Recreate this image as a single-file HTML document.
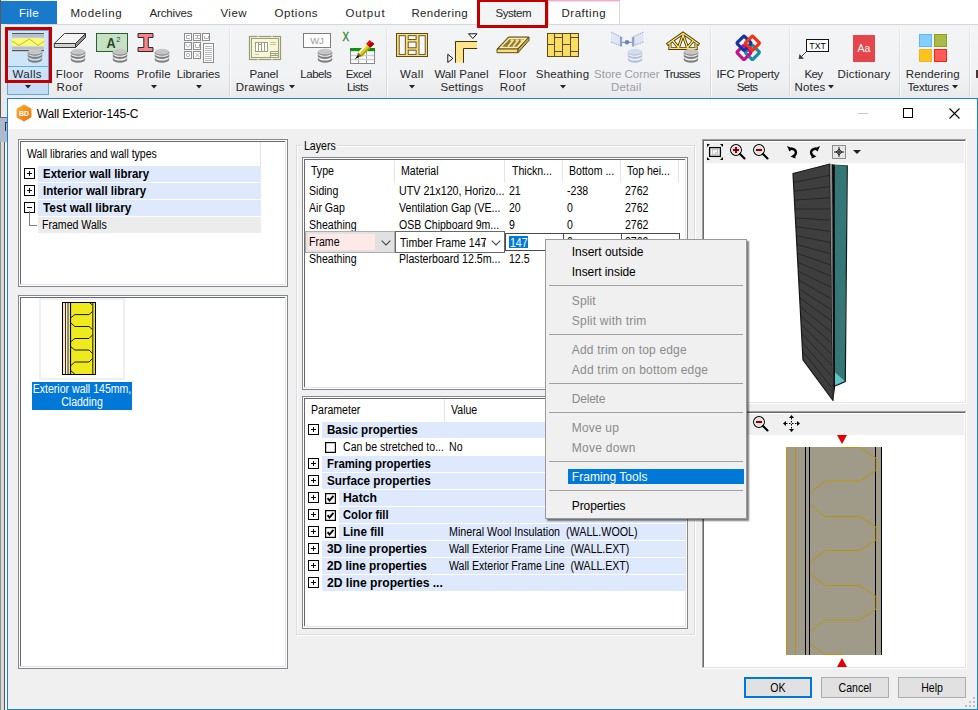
<!DOCTYPE html>
<html><head><meta charset="utf-8"><title>Wall Exterior-145-C</title>
<style>
html,body{margin:0;padding:0;}
body{width:978px;height:710px;overflow:hidden;background:#f0f0f0;position:relative;}
#root{position:absolute;left:0;top:0;width:978px;height:710px;overflow:hidden;}
#root div,#root span.t,#root svg{position:absolute;}
.t{white-space:pre;line-height:14px;}
.sg{font-family:"Liberation Sans",sans-serif;font-size:11.5px;letter-spacing:.35px;}
.ms{font-family:"Liberation Sans",sans-serif;font-size:12px;transform-origin:0 0;}
</style></head><body><div id="root">
<div style="left:0px;top:0px;width:978px;height:24px;background:#fff;"></div>
<div style="left:0px;top:24px;width:978px;height:74px;background:linear-gradient(#f3f4f6,#f1f2f4 70%,#e9eaec);"></div>
<div style="left:0px;top:24px;width:978px;height:1px;background:#d4d6d9;"></div>
<div style="left:0px;top:0px;width:1px;height:117px;background:#5a5a5a;"></div>
<div style="left:0px;top:117px;width:7px;height:25px;background:#adb9cd;"></div>
<div style="left:0px;top:117px;width:7px;height:1px;background:#6b6b6b;"></div>
<div style="left:0px;top:142px;width:7px;height:568px;background:#d9d9d9;"></div>
<div style="left:0px;top:142px;width:1px;height:568px;background:#8e8e8e;"></div>
<div style="left:4px;top:142px;width:1px;height:568px;background:#555;"></div>
<div style="left:5px;top:142px;width:2px;height:568px;background:#f7f3ea;"></div>
<div style="left:5px;top:122px;width:1px;height:9px;background:#333;"></div>
<div style="left:5px;top:122px;width:2px;height:1px;background:#333;"></div>
<div style="left:0px;top:0px;width:7px;height:117px;background:#e9e9e9;"></div>
<div style="left:0px;top:0px;width:1px;height:117px;background:#5a5a5a;"></div>
<div style="left:1px;top:1px;width:56px;height:23px;background:#1979ca;"></div>
<span class="t sg" style="left:19px;top:6px;color:#fff;font-size:11.5px;">File</span>
<div style="left:478px;top:0px;width:70px;height:28px;background:#f3f4f6;"></div>
<div style="left:548px;top:0px;width:72px;height:24px;background:#fff;border-left:1px solid #e3c9d3;border-right:1px solid #d9d9d9;box-sizing:border-box;"></div>
<div style="left:548px;top:0px;width:72px;height:1px;background:#f5a9c6;"></div>
<div style="left:548px;top:1px;width:72px;height:1px;background:#fbdde9;"></div>
<div style="left:477px;top:0px;width:71px;height:28px;border:3px solid #c00000;border-top-width:2px;box-sizing:border-box;"></div>
<div style="left:229px;top:27px;width:1px;height:70px;background:linear-gradient(#e6e7e9,#d6d7d9);"></div>
<div style="left:230px;top:27px;width:1px;height:70px;background:#fafafa;"></div>
<div style="left:386px;top:27px;width:1px;height:70px;background:linear-gradient(#e6e7e9,#d6d7d9);"></div>
<div style="left:387px;top:27px;width:1px;height:70px;background:#fafafa;"></div>
<div style="left:710px;top:27px;width:1px;height:70px;background:linear-gradient(#e6e7e9,#d6d7d9);"></div>
<div style="left:711px;top:27px;width:1px;height:70px;background:#fafafa;"></div>
<div style="left:789px;top:27px;width:1px;height:70px;background:linear-gradient(#e6e7e9,#d6d7d9);"></div>
<div style="left:790px;top:27px;width:1px;height:70px;background:#fafafa;"></div>
<div style="left:899px;top:27px;width:1px;height:70px;background:linear-gradient(#e6e7e9,#d6d7d9);"></div>
<div style="left:900px;top:27px;width:1px;height:70px;background:#fafafa;"></div>
<div style="left:969px;top:27px;width:1px;height:70px;background:linear-gradient(#e6e7e9,#d6d7d9);"></div>
<div style="left:970px;top:27px;width:1px;height:70px;background:#fafafa;"></div>
<div style="left:7px;top:30px;width:42px;height:65px;background:linear-gradient(#cde5f8 60%,#c3dbf3);border:1px solid #62a8e8;box-sizing:border-box;"></div>
<div style="left:8px;top:66px;width:40px;height:1px;background:#62a8e8;"></div>
<div style="left:5px;top:27px;width:47px;height:56px;border:3px solid #c00000;box-sizing:border-box;"></div>
<span class="t sg" style="left:12.4px;top:67px;color:#262626;font-size:11.5px;letter-spacing:0.37px;">Walls</span>
<span class="t sg" style="left:55.8px;top:67px;color:#262626;font-size:11.5px;letter-spacing:0.32px;">Floor</span>
<span class="t sg" style="left:94.1px;top:67px;color:#262626;font-size:11.5px;letter-spacing:-0.33px;">Rooms</span>
<span class="t sg" style="left:136.7px;top:67px;color:#262626;font-size:11.5px;letter-spacing:0.22px;">Profile</span>
<span class="t sg" style="left:176.8px;top:67px;color:#262626;font-size:11.5px;letter-spacing:-0.12px;">Libraries</span>
<span class="t sg" style="left:249.6px;top:67px;color:#262626;font-size:11.5px;letter-spacing:-0.15px;">Panel</span>
<span class="t sg" style="left:300.3px;top:67px;color:#262626;font-size:11.5px;letter-spacing:-0.47px;">Labels</span>
<span class="t sg" style="left:345.8px;top:67px;color:#262626;font-size:11.5px;letter-spacing:-0.60px;">Excel</span>
<span class="t sg" style="left:400.0px;top:67px;color:#262626;font-size:11.5px;letter-spacing:0.48px;">Wall</span>
<span class="t sg" style="left:434.4px;top:67px;color:#262626;font-size:11.5px;letter-spacing:-0.05px;">Wall Panel</span>
<span class="t sg" style="left:498.7px;top:67px;color:#262626;font-size:11.5px;letter-spacing:0.42px;">Floor</span>
<span class="t sg" style="left:535.8px;top:67px;color:#262626;font-size:11.5px;letter-spacing:0.18px;">Sheathing</span>
<span class="t sg" style="left:594.1px;top:67px;color:#9b9ea3;font-size:11.5px;letter-spacing:-0.04px;">Store Corner</span>
<span class="t sg" style="left:663.7px;top:67px;color:#262626;font-size:11.5px;letter-spacing:-0.60px;">Trusses</span>
<span class="t sg" style="left:716.6px;top:67px;color:#262626;font-size:11.5px;letter-spacing:-0.20px;">IFC Property</span>
<span class="t sg" style="left:804.4px;top:67px;color:#262626;font-size:11.5px;letter-spacing:-0.60px;">Key</span>
<span class="t sg" style="left:837.5px;top:67px;color:#262626;font-size:11.5px;letter-spacing:0.19px;">Dictionary</span>
<span class="t sg" style="left:905.8px;top:67px;color:#262626;font-size:11.5px;letter-spacing:0.09px;">Rendering</span>
<span class="t sg" style="left:56.4px;top:80px;color:#262626;font-size:11.5px;letter-spacing:0.47px;">Roof</span>
<span class="t sg" style="left:235.8px;top:80px;color:#262626;font-size:11.5px;letter-spacing:0.12px;">Drawings</span>
<span class="t sg" style="left:346.9px;top:80px;color:#262626;font-size:11.5px;letter-spacing:-0.49px;">Lists</span>
<span class="t sg" style="left:440.4px;top:80px;color:#262626;font-size:11.5px;letter-spacing:0.17px;">Settings</span>
<span class="t sg" style="left:499.8px;top:80px;color:#262626;font-size:11.5px;letter-spacing:0.41px;">Roof</span>
<span class="t sg" style="left:610.9px;top:80px;color:#9b9ea3;font-size:11.5px;letter-spacing:0.20px;">Detail</span>
<span class="t sg" style="left:736.7px;top:80px;color:#262626;font-size:11.5px;letter-spacing:-0.53px;">Sets</span>
<span class="t sg" style="left:794.5px;top:80px;color:#262626;font-size:11.5px;letter-spacing:0.19px;">Notes</span>
<span class="t sg" style="left:907.4px;top:80px;color:#262626;font-size:11.5px;letter-spacing:-0.28px;">Textures</span>
<svg style="left:24.5px;top:85px" width="6" height="4" viewBox="0 0 6 4"><path d="M0 0H6L3 3.4Z" fill="#222"/></svg>
<svg style="left:150.5px;top:85px" width="6" height="4" viewBox="0 0 6 4"><path d="M0 0H6L3 3.4Z" fill="#222"/></svg>
<svg style="left:195.5px;top:85px" width="6" height="4" viewBox="0 0 6 4"><path d="M0 0H6L3 3.4Z" fill="#222"/></svg>
<svg style="left:408.5px;top:85px" width="6" height="4" viewBox="0 0 6 4"><path d="M0 0H6L3 3.4Z" fill="#222"/></svg>
<svg style="left:559.5px;top:85px" width="6" height="4" viewBox="0 0 6 4"><path d="M0 0H6L3 3.4Z" fill="#222"/></svg>
<svg style="left:289.3px;top:85px" width="6" height="4" viewBox="0 0 6 4"><path d="M0 0H6L3 3.4Z" fill="#222"/></svg>
<svg style="left:828px;top:85px" width="6" height="4" viewBox="0 0 6 4"><path d="M0 0H6L3 3.4Z" fill="#222"/></svg>
<svg style="left:951.5px;top:85px" width="6" height="4" viewBox="0 0 6 4"><path d="M0 0H6L3 3.4Z" fill="#222"/></svg>
<span class="t sg" style="left:70.4px;top:6px;color:#262626;font-size:11.5px;letter-spacing:0.65px;">Modeling</span>
<span class="t sg" style="left:149.4px;top:6px;color:#262626;font-size:11.5px;letter-spacing:-0.13px;">Archives</span>
<span class="t sg" style="left:220.4px;top:6px;color:#262626;font-size:11.5px;letter-spacing:0.49px;">View</span>
<span class="t sg" style="left:274.4px;top:6px;color:#262626;font-size:11.5px;letter-spacing:0.60px;">Options</span>
<span class="t sg" style="left:345.4px;top:6px;color:#262626;font-size:11.5px;letter-spacing:0.94px;">Output</span>
<span class="t sg" style="left:411.4px;top:6px;color:#262626;font-size:11.5px;letter-spacing:0.39px;">Rendering</span>
<span class="t sg" style="left:495.4px;top:6px;color:#262626;font-size:11.5px;letter-spacing:-0.43px;">System</span>
<span class="t sg" style="left:561.4px;top:6px;color:#262626;font-size:11.5px;letter-spacing:0.56px;">Drafting</span>
<div style="left:976px;top:70px;width:2px;height:8px;background:#4a3838;"></div>
<svg style="left:11px;top:32px" width="35" height="20" viewBox="11 32 35 20"><rect x="12" y="33" width="32" height="1.2" fill="#555"/><rect x="12" y="34.6" width="32" height="3" fill="#bdbdbd"/><rect x="12" y="38.6" width="32" height="7.2" fill="#fbfb72"/><path d="M12 41 L19 45.4 L29.5 39 L38 45.4 L44 41.2" stroke="#c8b400" stroke-width=".9" fill="none"/><rect x="12" y="46.6" width="32" height="3" fill="#bdbdbd"/><rect x="12" y="50" width="32" height="1.2" fill="#555"/></svg>
<svg style="left:27px;top:48px" width="16" height="16" viewBox="27 48 16 16"><rect x="27.9" y="52" width="14.2" height="7.7" fill="#7f7f7f"/><ellipse cx="35" cy="59.7" rx="7.1" ry="3" fill="#7f7f7f"/><ellipse cx="35" cy="57.6" rx="7.1" ry="2.9" fill="#cce4f7"/><rect x="27.9" y="52" width="14.2" height="4" fill="#7f7f7f"/><ellipse cx="35" cy="56" rx="7.1" ry="3" fill="#7f7f7f"/><ellipse cx="35" cy="53.9" rx="7.1" ry="2.9" fill="#cce4f7"/><rect x="27.9" y="52" width="14.2" height=".8" fill="#7f7f7f"/><ellipse cx="35" cy="52.7" rx="7.1" ry="3" fill="#7f7f7f"/><ellipse cx="35" cy="51.7" rx="7.2" ry="2.9" fill="#c6c6c6"/></svg>
<svg style="left:53px;top:32px" width="34" height="17" viewBox="53 32 34 17"><polygon points="64.5,33.5 85.5,33.5 75.5,43.5 54.3,43.5" fill="#f4f4f4" stroke="#3a3a3a" stroke-width="1" stroke-linejoin="round"/><polygon points="54.3,43.5 75.5,43.5 75.5,47.5 54.3,47.5" fill="#d2d2d2" stroke="#3a3a3a" stroke-width="1" stroke-linejoin="round"/><polygon points="75.5,43.5 85.5,33.5 85.5,37.5 75.5,47.5" fill="#8c8c8c" stroke="#3a3a3a" stroke-width="1" stroke-linejoin="round"/></svg>
<svg style="left:70px;top:48px" width="16" height="16" viewBox="70 48 16 16"><rect x="70.9" y="52" width="14.2" height="7.7" fill="#7f7f7f"/><ellipse cx="78" cy="59.7" rx="7.1" ry="3" fill="#7f7f7f"/><ellipse cx="78" cy="57.6" rx="7.1" ry="2.9" fill="#f2f3f5"/><rect x="70.9" y="52" width="14.2" height="4" fill="#7f7f7f"/><ellipse cx="78" cy="56" rx="7.1" ry="3" fill="#7f7f7f"/><ellipse cx="78" cy="53.9" rx="7.1" ry="2.9" fill="#f2f3f5"/><rect x="70.9" y="52" width="14.2" height=".8" fill="#7f7f7f"/><ellipse cx="78" cy="52.7" rx="7.1" ry="3" fill="#7f7f7f"/><ellipse cx="78" cy="51.7" rx="7.2" ry="2.9" fill="#c6c6c6"/></svg>
<svg style="left:95px;top:32px" width="34" height="21" viewBox="95 32 34 21"><rect x="96.5" y="33.5" width="31" height="18" fill="#c6e1c4" stroke="#2f5f2f" stroke-width="1"/><text x="106.5" y="47.8" font-family="Liberation Sans,sans-serif" font-size="14" font-weight="bold" fill="#28462a" transform="translate(106.5 0) scale(.9 1) translate(-106.5 0)">A</text><text x="116.2" y="41.8" font-family="Liberation Sans,sans-serif" font-size="7.5" fill="#28462a">2</text></svg>
<svg style="left:112px;top:48px" width="16" height="16" viewBox="112 48 16 16"><rect x="112.9" y="52" width="14.2" height="7.7" fill="#7f7f7f"/><ellipse cx="120" cy="59.7" rx="7.1" ry="3" fill="#7f7f7f"/><ellipse cx="120" cy="57.6" rx="7.1" ry="2.9" fill="#f2f3f5"/><rect x="112.9" y="52" width="14.2" height="4" fill="#7f7f7f"/><ellipse cx="120" cy="56" rx="7.1" ry="3" fill="#7f7f7f"/><ellipse cx="120" cy="53.9" rx="7.1" ry="2.9" fill="#f2f3f5"/><rect x="112.9" y="52" width="14.2" height=".8" fill="#7f7f7f"/><ellipse cx="120" cy="52.7" rx="7.1" ry="3" fill="#7f7f7f"/><ellipse cx="120" cy="51.7" rx="7.2" ry="2.9" fill="#c6c6c6"/></svg>
<svg style="left:136px;top:32px" width="19" height="22" viewBox="136 32 19 22"><path d="M138 33.5 H153 V37.5 H148.3 V47.5 H153 V51.5 H138 V47.5 H143.8 V37.5 H138 Z" fill="#f58489" stroke="#2a2a2a" stroke-width="1" stroke-linejoin="round"/></svg>
<svg style="left:154px;top:48px" width="16" height="16" viewBox="154 48 16 16"><rect x="154.9" y="52" width="14.2" height="7.7" fill="#7f7f7f"/><ellipse cx="162" cy="59.7" rx="7.1" ry="3" fill="#7f7f7f"/><ellipse cx="162" cy="57.6" rx="7.1" ry="2.9" fill="#f2f3f5"/><rect x="154.9" y="52" width="14.2" height="4" fill="#7f7f7f"/><ellipse cx="162" cy="56" rx="7.1" ry="3" fill="#7f7f7f"/><ellipse cx="162" cy="53.9" rx="7.1" ry="2.9" fill="#f2f3f5"/><rect x="154.9" y="52" width="14.2" height=".8" fill="#7f7f7f"/><ellipse cx="162" cy="52.7" rx="7.1" ry="3" fill="#7f7f7f"/><ellipse cx="162" cy="51.7" rx="7.2" ry="2.9" fill="#c6c6c6"/></svg>
<svg style="left:183px;top:32px" width="32" height="32" viewBox="183 32 32 32"><rect x="184.5" y="33.5" width="7" height="7" fill="#fff" stroke="#8c8c8c" stroke-width="1"/><path d="M190 35.5 H186.5 V38.5 H190" stroke="#b0b0b0" stroke-width="1" fill="none"/><rect x="193.5" y="33.5" width="7" height="7" fill="#fff" stroke="#8c8c8c" stroke-width="1"/><path d="M195 35.5 H200 M195 38.5 H200 M197.5 35.5 V38.5" stroke="#b0b0b0" stroke-width="1" fill="none"/><rect x="202.5" y="33.5" width="7" height="7" fill="#fff" stroke="#8c8c8c" stroke-width="1"/><path d="M204.5 36 V38.5 H208.5 V36" stroke="#b0b0b0" stroke-width="1" fill="none"/><rect x="184.5" y="42.5" width="7" height="7" fill="#fff" stroke="#8c8c8c" stroke-width="1"/><path d="M186 44 C186 48 190 48 190 44" stroke="#b0b0b0" stroke-width="1" fill="none"/><rect x="193.5" y="42.5" width="7" height="7" fill="#fff" stroke="#8c8c8c" stroke-width="1"/><path d="M195.5 44 V47.5 H199.5 V44" stroke="#b0b0b0" stroke-width="1" fill="none"/><rect x="184.5" y="51.5" width="7" height="7" fill="#fff" stroke="#8c8c8c" stroke-width="1"/><circle cx="188" cy="55" r="1.7" stroke="#b0b0b0" stroke-width="1" fill="none"/><rect x="193.5" y="51.5" width="7" height="7" fill="#fff" stroke="#8c8c8c" stroke-width="1"/><path d="M195.5 53 L199.5 57 M199.5 53 L195.5 57" stroke="#b0b0b0" stroke-width="1" fill="none"/><rect x="203.5" y="43.5" width="10" height="19" fill="#fff" stroke="#8c8c8c" stroke-width="1"/><rect x="205" y="46" width="7" height="1" fill="#b8b8b8"/><rect x="205" y="48" width="7" height="1" fill="#b8b8b8"/><rect x="205" y="50" width="7" height="1" fill="#b8b8b8"/><rect x="205" y="52" width="7" height="1" fill="#b8b8b8"/><rect x="205" y="54" width="7" height="1" fill="#b8b8b8"/><rect x="205" y="56" width="7" height="1" fill="#b8b8b8"/><rect x="205" y="58" width="7" height="1" fill="#b8b8b8"/><rect x="205" y="60" width="7" height="1" fill="#b8b8b8"/></svg>
<svg style="left:248px;top:35px" width="34" height="26" viewBox="248 35 34 26"><rect x="249.5" y="36.5" width="31" height="23" fill="#f6f6dc" stroke="#9c9a76" stroke-width="1.2"/><rect x="251.5" y="38.5" width="27" height="19" fill="none" stroke="#a09e7c" stroke-width="1"/><path d="M258 36 V38 M272 36 V38 M258 58 V60 M272 58 V60" stroke="#f6f6dc" stroke-width="1"/><rect x="255.5" y="42.5" width="12" height="9" fill="#fff" stroke="#a09e7c" stroke-width="1"/><path d="M258.5 42.5 V51.5 M261.5 42.5 V51.5 M264.5 42.5 V51.5 M258.5 44.5 H261.5" stroke="#a09e7c" stroke-width="1"/><path d="M270 42.5 H276 M270 44.5 H276 M255 54.5 H259" stroke="#c9c68c" stroke-width="1"/><path d="M270.5 57 V51.5 H279 M270.5 53.5 H279 M270.5 55.5 H279 M275.5 53.5 V55.5" stroke="#a09e7c" stroke-width="1" fill="none"/></svg>
<svg style="left:302px;top:32px" width="30" height="17" viewBox="302 32 30 17"><rect x="303.5" y="33.5" width="27" height="14" fill="#fff" stroke="#7d7d7d" stroke-width="1"/><text x="317" y="44.3" text-anchor="middle" font-family="Liberation Sans,sans-serif" font-size="9.5" fill="#9a9a9a">WJ</text></svg>
<svg style="left:317px;top:48px" width="16" height="16" viewBox="317 48 16 16"><rect x="317.9" y="52" width="14.2" height="7.7" fill="#7f7f7f"/><ellipse cx="325" cy="59.7" rx="7.1" ry="3" fill="#7f7f7f"/><ellipse cx="325" cy="57.6" rx="7.1" ry="2.9" fill="#f2f3f5"/><rect x="317.9" y="52" width="14.2" height="4" fill="#7f7f7f"/><ellipse cx="325" cy="56" rx="7.1" ry="3" fill="#7f7f7f"/><ellipse cx="325" cy="53.9" rx="7.1" ry="2.9" fill="#f2f3f5"/><rect x="317.9" y="52" width="14.2" height=".8" fill="#7f7f7f"/><ellipse cx="325" cy="52.7" rx="7.1" ry="3" fill="#7f7f7f"/><ellipse cx="325" cy="51.7" rx="7.2" ry="2.9" fill="#c6c6c6"/></svg>
<svg style="left:341px;top:31px" width="36" height="34" viewBox="341 31 36 34"><text x="342.5" y="41.5" font-family="Liberation Sans,sans-serif" font-size="12" fill="#1e7d1e" stroke="#1e7d1e" stroke-width=".25" transform="translate(342.5 0) scale(.82 1) translate(-342.5 0)">X</text><rect x="350.5" y="48.5" width="24" height="15" fill="#fff" stroke="#8a8a8a" stroke-width="1"/><rect x="350" y="48" width="25" height="3.2" fill="#129012"/><path d="M358.5 51 V63 M366.5 51 V63" stroke="#9a9a9a" stroke-width="1"/><path d="M351 55.5 H374 M351 59.5 H374" stroke="#cfcfcf" stroke-width="1.6"/><polygon points="357.8,52.6 366,44 370.5,47.6 362,56.2" fill="#d6d01e"/><polygon points="357.8,52.6 366,44 367.3,45.1 359.1,53.7" fill="#fffef0"/><polygon points="360.9,55.3 369.4,46.7 370.5,47.6 362,56.2" fill="#a89a10"/><polygon points="366,44 369.6,40 374.2,44 370.5,47.6" fill="#e81018"/><polygon points="368.2,45.8 372,41.9 374.2,44 370.5,47.6" fill="#a80008"/><polygon points="357.8,52.6 362,56.2 357.2,57.4" fill="#6e6410"/><polygon points="357.6,55.2 359,56.8 354.6,59.4" fill="#000"/></svg>
<svg style="left:395px;top:32px" width="34" height="26" viewBox="395 32 34 26"><rect x="396.5" y="33.5" width="31" height="23" fill="#f7de7c" stroke="#5e4a14" stroke-width="1"/><rect x="399.2" y="35.7" width="6.1" height="18.7" fill="#f6f7f9" stroke="#5e4a14" stroke-width=".9"/><rect x="408.2" y="35.7" width="7.9" height="3.8" fill="#f6f7f9" stroke="#5e4a14" stroke-width=".9"/><rect x="408.2" y="42" width="7.9" height="5.8" fill="#f6f7f9" stroke="#5e4a14" stroke-width=".9"/><rect x="408.2" y="50.2" width="7.9" height="4.2" fill="#f6f7f9" stroke="#5e4a14" stroke-width=".9"/><rect x="419" y="35.7" width="6.2" height="18.7" fill="#f6f7f9" stroke="#5e4a14" stroke-width=".9"/></svg>
<svg style="left:446px;top:32px" width="33" height="32" viewBox="446 32 33 32"><path d="M455.5 62.5 V41.5 H477 V48.5 H463.5 V62.5 Z" fill="#ffe48c" stroke="none"/><path d="M455.5 62.8 V41.5 H477.2 M477.2 48.5 H463.5 V62.8" fill="none" stroke="#3c3210" stroke-width="1"/><path d="M468.5 33.8 H477 L472.8 38.5 Z" fill="#fff" stroke="#111" stroke-width="1"/><path d="M447.8 54.3 V62.5 L452.8 58.4 Z" fill="#fff" stroke="#111" stroke-width="1"/></svg>
<svg style="left:496px;top:36px" width="35" height="18" viewBox="496 36 35 18"><polygon points="508.5,37 529,37 518,49 497,49" fill="#8f7836" stroke="#5e4a14" stroke-width="1" stroke-linejoin="round"/><polygon points="497,49 518,49 518,52.7 497,52.7" fill="#f7de7c" stroke="#5e4a14" stroke-width="1" stroke-linejoin="round"/><polygon points="518,49 529,37 529,40.5 518,52.7" fill="#c8a848" stroke="#5e4a14" stroke-width="1" stroke-linejoin="round"/><polygon points="509.3,38.5 526,38.5 517.3,47.5 500.5,47.5" fill="none" stroke="#fbefb0" stroke-width="1.3"/><path d="M513.5 40 L508 46.5 M518.5 40 L513 46.5 M523.5 40 L518 46.5" stroke="#fbefb0" stroke-width="1.5"/><path d="M510.5 40.5 H513 M515.5 40.5 H518 M520.5 40.5 H523" stroke="#f7de7c" stroke-width="2"/></svg>
<svg style="left:546px;top:32px" width="34" height="26" viewBox="546 32 34 26"><rect x="547.5" y="33.5" width="31" height="23" fill="#f8de62" stroke="#5e4a14" stroke-width="1"/><path d="M554.5 33.5 V56.5 M562.5 33.5 V56.5 M570.5 33.5 V56.5 M547.5 44.5 H554.5 M562.5 44.5 H570.5 M554.5 37.5 H562.5 M554.5 51.5 H562.5 M570.5 37.5 H578.5 M570.5 51.5 H578.5" stroke="#5e4a14" stroke-width="1" fill="none"/></svg>
<svg style="left:610px;top:31px" width="35" height="17" viewBox="610 31 35 17"><polygon points="611,32 622.5,37.7 622.5,46.2 611,42" fill="#dfe7f6"/><polygon points="643.4,32 631.7,37.7 631.7,46.2 643.4,42" fill="#dfe7f6"/><path d="M611 32 L622.5 37.7 M611 42 L620 45.5 M643.4 32 L631.7 37.7 M643.4 42 L634 45.5" stroke="#8ea2cc" stroke-width="1" stroke-dasharray="1.5 1"/><path d="M621 37 V46.5 M633.2 37 V46.5" stroke="#8ea2cc" stroke-width="2.2"/><path d="M622 42.3 H632" stroke="#7088b4" stroke-width="1"/><circle cx="627" cy="42.3" r="2.2" fill="#6c84b0"/></svg>
<svg style="left:627px;top:48px" width="16" height="16" viewBox="627 48 16 16"><rect x="627.9" y="52" width="14.2" height="7.7" fill="#b4c1da"/><ellipse cx="635" cy="59.7" rx="7.1" ry="3" fill="#b4c1da"/><ellipse cx="635" cy="57.6" rx="7.1" ry="2.9" fill="#f2f3f5"/><rect x="627.9" y="52" width="14.2" height="4" fill="#b4c1da"/><ellipse cx="635" cy="56" rx="7.1" ry="3" fill="#b4c1da"/><ellipse cx="635" cy="53.9" rx="7.1" ry="2.9" fill="#f2f3f5"/><rect x="627.9" y="52" width="14.2" height=".8" fill="#b4c1da"/><ellipse cx="635" cy="52.7" rx="7.1" ry="3" fill="#b4c1da"/><ellipse cx="635" cy="51.7" rx="7.2" ry="2.9" fill="#d3dcec"/></svg>
<svg style="left:665px;top:30px" width="36" height="21" viewBox="665 30 36 21"><path d="M668 43.8 L683 33.2 L698 43.8 M670 44 V48.4 M696 44 V48.4 M669.8 48.4 H696.2 M683 35 L678.5 47.5 M683 35 L687.5 47.5 M673.5 41.5 L678.5 47.5 M692.5 41.5 L687.5 47.5" stroke="#4e3c0c" stroke-width="3" fill="none" stroke-linejoin="miter" stroke-linecap="square"/><path d="M668 43.8 L683 33.2 L698 43.8 M670 44 V48.4 M696 44 V48.4 M669.8 48.4 H696.2 M683 35 L678.5 47.5 M683 35 L687.5 47.5 M673.5 41.5 L678.5 47.5 M692.5 41.5 L687.5 47.5" stroke="#fae272" stroke-width="1.3" fill="none" stroke-linejoin="miter" stroke-linecap="square"/></svg>
<svg style="left:683px;top:48px" width="16" height="16" viewBox="683 48 16 16"><rect x="683.9" y="52" width="14.2" height="7.7" fill="#7f7f7f"/><ellipse cx="691" cy="59.7" rx="7.1" ry="3" fill="#7f7f7f"/><ellipse cx="691" cy="57.6" rx="7.1" ry="2.9" fill="#f2f3f5"/><rect x="683.9" y="52" width="14.2" height="4" fill="#7f7f7f"/><ellipse cx="691" cy="56" rx="7.1" ry="3" fill="#7f7f7f"/><ellipse cx="691" cy="53.9" rx="7.1" ry="2.9" fill="#f2f3f5"/><rect x="683.9" y="52" width="14.2" height=".8" fill="#7f7f7f"/><ellipse cx="691" cy="52.7" rx="7.1" ry="3" fill="#7f7f7f"/><ellipse cx="691" cy="51.7" rx="7.2" ry="2.9" fill="#c6c6c6"/></svg>
<svg style="left:734px;top:33px" width="29" height="30" viewBox="734 33 29 30"><rect x="747.1999999999999" y="47.199999999999996" width="10.4" height="10.4" rx="1" fill="none" stroke="#1a8cab" stroke-width="3.2" transform="rotate(45 752.4 52.4)"/><rect x="738.8" y="47.199999999999996" width="10.4" height="10.4" rx="1" fill="none" stroke="#c21585" stroke-width="3.2" transform="rotate(45 744 52.4)"/><rect x="738.8" y="38.0" width="10.4" height="10.4" rx="1" fill="none" stroke="#1534a4" stroke-width="3.2" transform="rotate(45 744 43.2)"/><rect x="747.1999999999999" y="38.0" width="10.4" height="10.4" rx="1" fill="none" stroke="#f23416" stroke-width="3.2" transform="rotate(45 752.4 43.2)"/></svg>
<svg style="left:797px;top:38px" width="33" height="22" viewBox="797 38 33 22"><rect x="806.5" y="39.5" width="22" height="12" fill="#fff" stroke="#111" stroke-width="1"/><text x="817.7" y="48.8" text-anchor="middle" font-family="Liberation Sans,sans-serif" font-size="9.8" fill="#000" transform="translate(817.7 0) scale(.9 1) translate(-817.7 0)">TXT</text><path d="M806.5 51.5 L801 57" stroke="#444" stroke-width="1"/><polygon points="798.6,59 804,58.8 799.5,54" fill="#444"/></svg>
<svg style="left:853px;top:35px" width="22" height="27" viewBox="853 35 22 27"><rect x="853" y="35" width="22" height="27" fill="#e5464b"/><text x="864" y="52" text-anchor="middle" font-family="Liberation Sans,sans-serif" font-size="10.5" fill="#fff">Aa</text></svg>
<svg style="left:919px;top:34px" width="28" height="28" viewBox="919 34 28 28"><rect x="919.5" y="34.5" width="12" height="12" fill="#84ceff" stroke="#5cb8f4"/><rect x="934.5" y="34.5" width="12" height="12" fill="#abba46" stroke="#8aa222"/><rect x="919.5" y="49.5" width="12" height="12" fill="#fdc51b" stroke="#f4b228"/><rect x="934.5" y="49.5" width="12" height="12" fill="#ff5c52" stroke="#f22222"/></svg>
<div style="left:7px;top:98px;width:971px;height:612px;background:#f0f0f0;border:1px solid #1883d7;box-sizing:border-box;"></div>
<div style="left:8px;top:99px;width:969px;height:30px;background:#fff;"></div>
<svg style="left:15px;top:104px" width="18" height="18" viewBox="0 0 18 18"><defs><linearGradient id="hx" x1="0" y1="0" x2="1" y2="1"><stop offset="0" stop-color="#fbb12c"/><stop offset="1" stop-color="#e8700a"/></linearGradient></defs><path d="M9 .6L16.4 4.8V13.2L9 17.4L1.6 13.2V4.8Z" fill="url(#hx)"/><text x="9" y="11.6" font-family="Liberation Sans,sans-serif" font-size="7" font-weight="bold" fill="#fff" text-anchor="middle">BD</text></svg>
<span class="t sg" style="left:36.8px;top:107px;color:#000;font-size:12px;letter-spacing:-.14px;">Wall Exterior-145-C</span>
<div style="left:858px;top:113px;width:10px;height:1px;background:#c8c8c8;"></div>
<div style="left:903px;top:108px;width:10px;height:10px;border:1px solid #000;box-sizing:border-box;"></div>
<svg style="left:949px;top:108px" width="11" height="11" viewBox="0 0 11 11"><path d="M.5 .5L10.5 10.5M10.5 .5L.5 10.5" stroke="#000" stroke-width="1.1" fill="none"/></svg>
<div style="left:18px;top:139px;width:270px;height:148px;background:#828790;"></div>
<div style="left:19px;top:140px;width:268px;height:146px;background:#fff;"></div>
<div style="left:20px;top:141px;width:266px;height:144px;background:#e3e3e3;"></div>
<div style="left:20px;top:141px;width:265px;height:143px;background:#696969;"></div>
<div style="left:21px;top:142px;width:264px;height:142px;background:#fff;"></div>
<div style="left:21px;top:142px;width:239px;height:23px;background:#fff;"></div>
<div style="left:260px;top:142px;width:1px;height:24px;background:#e5e5e5;"></div>
<span class="t ms" style="left:27px;top:147px;color:#000;transform:scaleX(0.88);">Wall libraries and wall types</span>
<div style="left:38px;top:166px;width:223px;height:16px;background:#dfe9fd;"></div>
<svg style="left:24px;top:168px" width="11" height="11" viewBox="0 0 11 11"><rect x=".5" y=".5" width="10" height="10" fill="#fff" stroke="#000"/><path d="M3 5.5H8M5.5 3V8" stroke="#000" fill="none"/></svg>
<span class="t ms" style="left:42.7px;top:167px;color:#000;font-weight:bold;transform:scaleX(0.953);">Exterior wall library</span>
<div style="left:38px;top:183px;width:223px;height:16px;background:#dfe9fd;"></div>
<svg style="left:24px;top:185px" width="11" height="11" viewBox="0 0 11 11"><rect x=".5" y=".5" width="10" height="10" fill="#fff" stroke="#000"/><path d="M3 5.5H8M5.5 3V8" stroke="#000" fill="none"/></svg>
<span class="t ms" style="left:42.7px;top:184px;color:#000;font-weight:bold;transform:scaleX(0.96);">Interior wall library</span>
<div style="left:38px;top:200px;width:223px;height:16px;background:#dfe9fd;"></div>
<svg style="left:24px;top:202px" width="11" height="11" viewBox="0 0 11 11"><rect x=".5" y=".5" width="10" height="10" fill="#fff" stroke="#000"/><path d="M3 5.5H8" stroke="#000" fill="none"/></svg>
<span class="t ms" style="left:42.7px;top:201px;color:#000;font-weight:bold;transform:scaleX(0.983);">Test wall library</span>
<div style="left:38px;top:217px;width:223px;height:16px;background:#ececec;"></div>
<div style="left:29px;top:211px;width:1px;height:14px;background:#808080;"></div>
<div style="left:29px;top:225px;width:8px;height:1px;background:#808080;"></div>
<span class="t ms" style="left:42px;top:218px;color:#000;transform:scaleX(0.88);">Framed Walls</span>
<div style="left:18px;top:295px;width:270px;height:374px;background:#828790;"></div>
<div style="left:19px;top:296px;width:268px;height:372px;background:#fff;"></div>
<div style="left:20px;top:297px;width:266px;height:370px;background:#e3e3e3;"></div>
<div style="left:20px;top:297px;width:265px;height:369px;background:#696969;"></div>
<div style="left:21px;top:298px;width:264px;height:368px;background:#fff;"></div>
<div style="left:39px;top:298px;width:86px;height:82px;background:#fff;border:2px solid #f0f0f0;box-sizing:border-box;"></div>
<svg style="left:62px;top:302px" width="34" height="73" viewBox="0 0 34 73">
<rect x=".5" y=".5" width="33" height="72" fill="#eeea1e" stroke="#000"/>
<rect x="1" y="1" width="2.5" height="71" fill="#fbe6c4"/><rect x="4" y="1" width="2" height="71" fill="#fdeccf"/><rect x="6.5" y="1" width="1.5" height="71" fill="#fff6e0"/>
<path d="M3.5 0 V73 M6 0 V73" stroke="#000" stroke-width=".8" fill="none"/>
<path d="M8.5 0 V73" stroke="#000" stroke-width="1.2" fill="none"/>
<path d="M30.8 0 V73" stroke="#000" stroke-width=".9" fill="none"/>
<path d="M27.5 .7 L30.5 3 M30.5 9.5 L27 12.6 H12.8 L8.5 16 M8.5 20.6 L12.8 24.5 H27 L30.5 27.5 M30.5 33 L27 36.5 H12.8 L8.5 40 M8.5 44.5 L12.8 48 H27 L30.5 51.5 M30.5 56.5 L27 60 H12.8 L8.5 64 M8.5 68.5 L12.8 72" stroke="#000" stroke-width=".9" fill="none"/>
</svg>
<div style="left:32px;top:382px;width:100px;height:28px;background:#0078d7;"></div>
<span class="t ms" style="left:-18px;width:200px;text-align:center;transform-origin:50% 0;top:382px;color:#fff;transform:scaleX(0.88);">Exterior wall 145mm,</span>
<span class="t ms" style="left:-18px;width:200px;text-align:center;transform-origin:50% 0;top:395px;color:#fff;transform:scaleX(0.88);">Cladding</span>
<div style="left:296px;top:145px;width:399px;height:490px;border:1px solid #dcdcdc;box-sizing:border-box;box-shadow:inset 1px 1px 0 #fff,1px 1px 0 #fff;"></div>
<div style="left:302px;top:140px;width:35px;height:14px;background:#f0f0f0;"></div>
<span class="t ms" style="left:304px;top:139px;color:#000;transform:scaleX(0.88);">Layers</span>
<div style="left:302px;top:157px;width:386px;height:233px;background:#828790;"></div>
<div style="left:303px;top:158px;width:384px;height:231px;background:#fff;"></div>
<div style="left:304px;top:159px;width:382px;height:229px;background:#e3e3e3;"></div>
<div style="left:304px;top:159px;width:381px;height:228px;background:#696969;"></div>
<div style="left:305px;top:160px;width:380px;height:227px;background:#fff;"></div>
<span class="t ms" style="left:311px;top:164px;color:#000;transform:scaleX(0.88);">Type</span>
<span class="t ms" style="left:401px;top:164px;color:#000;transform:scaleX(0.88);">Material</span>
<span class="t ms" style="left:512px;top:164px;color:#000;transform:scaleX(0.88);">Thickn...</span>
<span class="t ms" style="left:569px;top:164px;color:#000;transform:scaleX(0.88);">Bottom ...</span>
<span class="t ms" style="left:627px;top:164px;color:#000;transform:scaleX(0.88);">Top hei...</span>
<div style="left:394px;top:160px;width:1px;height:23px;background:#e5e5e5;"></div>
<div style="left:504px;top:160px;width:1px;height:23px;background:#e5e5e5;"></div>
<div style="left:562px;top:160px;width:1px;height:23px;background:#e5e5e5;"></div>
<div style="left:620px;top:160px;width:1px;height:23px;background:#e5e5e5;"></div>
<div style="left:678px;top:160px;width:1px;height:23px;background:#e5e5e5;"></div>
<span class="t ms" style="left:309px;top:184px;color:#000;transform:scaleX(0.88);">Siding</span>
<span class="t ms" style="left:399.0px;top:184px;color:#000;transform:scaleX(0.893);">UTV 21x120, Horizo...</span>
<span class="t ms" style="left:509px;top:184px;color:#000;transform:scaleX(0.88);">21</span>
<span class="t ms" style="left:567px;top:184px;color:#000;transform:scaleX(0.88);">-238</span>
<span class="t ms" style="left:625px;top:184px;color:#000;transform:scaleX(0.88);">2762</span>
<span class="t ms" style="left:309px;top:201px;color:#000;transform:scaleX(0.88);">Air Gap</span>
<span class="t ms" style="left:399.0px;top:201px;color:#000;transform:scaleX(0.884);">Ventilation Gap (VE...</span>
<span class="t ms" style="left:509px;top:201px;color:#000;transform:scaleX(0.88);">20</span>
<span class="t ms" style="left:567px;top:201px;color:#000;transform:scaleX(0.88);">0</span>
<span class="t ms" style="left:625px;top:201px;color:#000;transform:scaleX(0.88);">2762</span>
<span class="t ms" style="left:309px;top:218px;color:#000;transform:scaleX(0.88);">Sheathing</span>
<span class="t ms" style="left:399.0px;top:218px;color:#000;transform:scaleX(0.878);">OSB Chipboard 9m...</span>
<span class="t ms" style="left:509px;top:218px;color:#000;transform:scaleX(0.88);">9</span>
<span class="t ms" style="left:567px;top:218px;color:#000;transform:scaleX(0.88);">0</span>
<span class="t ms" style="left:625px;top:218px;color:#000;transform:scaleX(0.88);">2762</span>
<span class="t ms" style="left:309px;top:252px;color:#000;transform:scaleX(0.88);">Sheathing</span>
<span class="t ms" style="left:399.0px;top:252px;color:#000;transform:scaleX(0.884);">Plasterboard 12.5m...</span>
<span class="t ms" style="left:509px;top:252px;color:#000;transform:scaleX(0.88);">12.5</span>
<div style="left:305px;top:231px;width:90px;height:22px;background:#e1e1e1;border:1px solid #adadad;box-sizing:border-box;"></div>
<div style="left:308px;top:234px;width:67px;height:16px;background:#ffe8e8;"></div>
<span class="t ms" style="left:309px;top:235px;color:#000;transform:scaleX(0.88);">Frame</span>
<svg style="left:381px;top:240px" width="10" height="6" viewBox="0 0 10 6"><path d="M.7 .7L5 5L9.3 .7" stroke="#444" stroke-width="1.1" fill="none"/></svg>
<div style="left:395px;top:231px;width:110px;height:22px;background:#fff;border:1px solid #6a6a6a;box-sizing:border-box;"></div>
<span class="t ms" style="left:400px;top:236px;color:#000;transform:scaleX(0.88);">Timber Frame 147</span>
<div style="left:484px;top:241px;width:1px;height:6px;background:#444;"></div>
<svg style="left:491px;top:240px" width="10" height="6" viewBox="0 0 10 6"><path d="M.7 .7L5 5L9.3 .7" stroke="#444" stroke-width="1.1" fill="none"/></svg>
<div style="left:505px;top:233px;width:59px;height:18px;background:#fff;border:1px solid #4a4a4a;box-sizing:border-box;"></div>
<div style="left:563px;top:233px;width:59px;height:18px;background:#fff;border:1px solid #4a4a4a;box-sizing:border-box;"></div>
<div style="left:621px;top:233px;width:59px;height:18px;background:#fff;border:1px solid #4a4a4a;box-sizing:border-box;"></div>
<span class="t ms" style="left:567px;top:235px;color:#000;transform:scaleX(0.88);">0</span>
<span class="t ms" style="left:625px;top:235px;color:#000;transform:scaleX(0.88);">2762</span>
<div style="left:509px;top:236px;width:19px;height:12px;background:#0078d7;"></div>
<span class="t ms" style="left:510px;top:236px;color:#fff;transform:scaleX(0.88);">147</span>
<div style="left:302px;top:396px;width:386px;height:233px;background:#828790;"></div>
<div style="left:303px;top:397px;width:384px;height:231px;background:#fff;"></div>
<div style="left:304px;top:398px;width:382px;height:229px;background:#e3e3e3;"></div>
<div style="left:304px;top:398px;width:381px;height:228px;background:#696969;"></div>
<div style="left:305px;top:399px;width:380px;height:227px;background:#fff;"></div>
<span class="t ms" style="left:311px;top:403px;color:#000;transform:scaleX(0.88);">Parameter</span>
<span class="t ms" style="left:451px;top:403px;color:#000;transform:scaleX(0.88);">Value</span>
<div style="left:444px;top:399px;width:1px;height:23px;background:#e5e5e5;"></div>
<div style="left:322px;top:422px;width:363px;height:16px;background:#dfe9fd;"></div>
<svg style="left:308px;top:424px" width="11" height="11" viewBox="0 0 11 11"><rect x=".5" y=".5" width="10" height="10" fill="#fff" stroke="#000"/><path d="M3 5.5H8M5.5 3V8" stroke="#000" fill="none"/></svg>
<span class="t ms" style="left:326.6px;top:423px;color:#000;font-weight:bold;transform:scaleX(0.965);">Basic properties</span>
<svg style="left:325px;top:442px" width="11" height="11" viewBox="0 0 11 11"><rect x=".6" y=".6" width="9.8" height="9.8" fill="#fff" stroke="#000" stroke-width="1.2"/></svg>
<span class="t ms" style="left:343px;top:440px;color:#000;transform:scaleX(0.88);">Can be stretched to...</span>
<span class="t ms" style="left:449px;top:440px;color:#000;transform:scaleX(0.88);">No</span>
<div style="left:322px;top:456px;width:363px;height:16px;background:#dfe9fd;"></div>
<svg style="left:308px;top:458px" width="11" height="11" viewBox="0 0 11 11"><rect x=".5" y=".5" width="10" height="10" fill="#fff" stroke="#000"/><path d="M3 5.5H8M5.5 3V8" stroke="#000" fill="none"/></svg>
<span class="t ms" style="left:326.6px;top:457px;color:#000;font-weight:bold;transform:scaleX(0.949);">Framing properties</span>
<div style="left:322px;top:473px;width:363px;height:16px;background:#dfe9fd;"></div>
<svg style="left:308px;top:475px" width="11" height="11" viewBox="0 0 11 11"><rect x=".5" y=".5" width="10" height="10" fill="#fff" stroke="#000"/><path d="M3 5.5H8M5.5 3V8" stroke="#000" fill="none"/></svg>
<span class="t ms" style="left:326.6px;top:474px;color:#000;font-weight:bold;transform:scaleX(0.979);">Surface properties</span>
<div style="left:339px;top:490px;width:346px;height:16px;background:#dfe9fd;"></div>
<svg style="left:308px;top:492px" width="11" height="11" viewBox="0 0 11 11"><rect x=".5" y=".5" width="10" height="10" fill="#fff" stroke="#000"/><path d="M3 5.5H8M5.5 3V8" stroke="#000" fill="none"/></svg>
<svg style="left:325px;top:493px" width="11" height="11" viewBox="0 0 11 11"><rect x=".6" y=".6" width="9.8" height="9.8" fill="#fff" stroke="#000" stroke-width="1.2"/><path d="M2.6 5.2L4.5 7.6L8.4 2.8" stroke="#000" stroke-width="1.9" fill="none"/></svg>
<span class="t ms" style="left:343.2px;top:491px;color:#000;font-weight:bold;transform:scaleX(1.02);">Hatch</span>
<div style="left:339px;top:507px;width:346px;height:16px;background:#dfe9fd;"></div>
<svg style="left:308px;top:509px" width="11" height="11" viewBox="0 0 11 11"><rect x=".5" y=".5" width="10" height="10" fill="#fff" stroke="#000"/><path d="M3 5.5H8M5.5 3V8" stroke="#000" fill="none"/></svg>
<svg style="left:325px;top:510px" width="11" height="11" viewBox="0 0 11 11"><rect x=".6" y=".6" width="9.8" height="9.8" fill="#fff" stroke="#000" stroke-width="1.2"/><path d="M2.6 5.2L4.5 7.6L8.4 2.8" stroke="#000" stroke-width="1.9" fill="none"/></svg>
<span class="t ms" style="left:343.2px;top:508px;color:#000;font-weight:bold;transform:scaleX(0.936);">Color fill</span>
<div style="left:339px;top:524px;width:346px;height:16px;background:#dfe9fd;"></div>
<svg style="left:308px;top:526px" width="11" height="11" viewBox="0 0 11 11"><rect x=".5" y=".5" width="10" height="10" fill="#fff" stroke="#000"/><path d="M3 5.5H8M5.5 3V8" stroke="#000" fill="none"/></svg>
<svg style="left:325px;top:527px" width="11" height="11" viewBox="0 0 11 11"><rect x=".6" y=".6" width="9.8" height="9.8" fill="#fff" stroke="#000" stroke-width="1.2"/><path d="M2.6 5.2L4.5 7.6L8.4 2.8" stroke="#000" stroke-width="1.9" fill="none"/></svg>
<span class="t ms" style="left:343.2px;top:525px;color:#000;font-weight:bold;transform:scaleX(0.969);">Line fill</span>
<span class="t ms" style="left:449.1px;top:525px;color:#000;transform:scaleX(0.892);">Mineral Wool Insulation  (WALL.WOOL)</span>
<div style="left:322px;top:541px;width:363px;height:16px;background:#dfe9fd;"></div>
<svg style="left:308px;top:543px" width="11" height="11" viewBox="0 0 11 11"><rect x=".5" y=".5" width="10" height="10" fill="#fff" stroke="#000"/><path d="M3 5.5H8M5.5 3V8" stroke="#000" fill="none"/></svg>
<span class="t ms" style="left:326.6px;top:542px;color:#000;font-weight:bold;transform:scaleX(0.986);">3D line properties</span>
<span class="t ms" style="left:449.1px;top:542px;color:#000;transform:scaleX(0.879);">Wall Exterior Frame Line  (WALL.EXT)</span>
<div style="left:322px;top:558px;width:363px;height:16px;background:#dfe9fd;"></div>
<svg style="left:308px;top:560px" width="11" height="11" viewBox="0 0 11 11"><rect x=".5" y=".5" width="10" height="10" fill="#fff" stroke="#000"/><path d="M3 5.5H8M5.5 3V8" stroke="#000" fill="none"/></svg>
<span class="t ms" style="left:326.6px;top:559px;color:#000;font-weight:bold;transform:scaleX(0.986);">2D line properties</span>
<span class="t ms" style="left:449.1px;top:559px;color:#000;transform:scaleX(0.879);">Wall Exterior Frame Line  (WALL.EXT)</span>
<div style="left:322px;top:575px;width:363px;height:16px;background:#dfe9fd;"></div>
<svg style="left:308px;top:577px" width="11" height="11" viewBox="0 0 11 11"><rect x=".5" y=".5" width="10" height="10" fill="#fff" stroke="#000"/><path d="M3 5.5H8M5.5 3V8" stroke="#000" fill="none"/></svg>
<span class="t ms" style="left:326.6px;top:576px;color:#000;font-weight:bold;transform:scaleX(1.01);">2D line properties ...</span>
<div style="left:702px;top:139px;width:265px;height:265px;background:#fff;"></div>
<div style="left:702px;top:139px;width:264px;height:264px;background:#a0a0a0;"></div>
<div style="left:703px;top:140px;width:263px;height:263px;background:#e3e3e3;"></div>
<div style="left:703px;top:140px;width:262px;height:262px;background:#696969;"></div>
<div style="left:704px;top:141px;width:261px;height:261px;background:#fff;"></div>
<div style="left:705px;top:142px;width:259px;height:21px;background:#f0f0f0;"></div>
<div style="left:702px;top:411px;width:265px;height:258px;background:#fff;"></div>
<div style="left:702px;top:411px;width:264px;height:257px;background:#a0a0a0;"></div>
<div style="left:703px;top:412px;width:263px;height:256px;background:#e3e3e3;"></div>
<div style="left:703px;top:412px;width:262px;height:255px;background:#696969;"></div>
<div style="left:704px;top:413px;width:261px;height:254px;background:#fff;"></div>
<div style="left:705px;top:414px;width:259px;height:21px;background:#f0f0f0;"></div>
<svg style="left:706px;top:163px" width="258" height="240" viewBox="706 163 258 240">
<polygon points="793,173.5 830,164 833,400.5 803,360" fill="#3e3e3e" stroke="#161616" stroke-width="1.2" stroke-linejoin="round"/>
<path d="M793.5 182.4 L830.1 175.2 M794.0 191.3 L830.3 186.5 M794.4 200.1 L830.4 197.7 M794.9 209.0 L830.6 209.0 M795.4 217.9 L830.7 220.2 M795.9 226.8 L830.9 231.4 M796.3 235.7 L831.0 242.7 M796.8 244.5 L831.1 253.9 M797.3 253.4 L831.3 265.1 M797.8 262.3 L831.4 276.4 M798.2 271.2 L831.6 287.6 M798.7 280.1 L831.7 298.9 M799.2 289.0 L831.9 310.1 M799.7 297.8 L832.0 321.3 M800.1 306.7 L832.1 332.6 M800.6 315.6 L832.3 343.8 M801.1 324.5 L832.4 355.0 M801.6 333.4 L832.6 366.3 M802.0 342.2 L832.7 377.5 M802.5 351.1 L832.9 388.8 " stroke="#1c1c1c" stroke-width=".7" fill="none"/>
<polygon points="830,164 832,164 834,396 833,400.5" fill="#8a8a8a"/>
<polygon points="832,164 835,165 835,388 833.3,400.5" fill="#0c0c0c"/>
<polygon points="834.8,165.5 847,166 845,381 835,385.5" fill="#357676"/>
<polygon points="835,372.5 844.5,380.8 835,385.5" fill="#62c4c8"/>
<path d="M847.3 165.5 L845.3 381.5 L835 386" stroke="#0c1c1c" stroke-width="1.2" fill="none"/>
<path d="M834 165 L847.5 165.8" stroke="#1d4a4a" stroke-width="1" fill="none"/>
</svg>
<svg style="left:706px;top:435px" width="258" height="232" viewBox="706 435 258 232">
<rect x="786" y="447" width="96" height="208" fill="#a09b88"/>
<path d="M786.5 447 V655 M795.5 447 V655" stroke="#b9930f" stroke-width="1" fill="none"/>
<path d="M805.5 447 V655 M809.5 447 V655 M875.5 447 V655 M881.5 447 V655" stroke="#000" stroke-width="1" fill="none"/>
<path d="M842 447.5 H859.5 L876 458 V470.5 L859.5 481 H825 L810 493 M810 504.5 L825 516.5 H859.5 L876 527 V540 L859.5 550.5 H825 L810 562 M810 574 L825 585.5 H859.5 L876 596.5 V609 L859.5 620 H825 L810 631.5 M810 643.5 L825 654.5 H843" stroke="#b9930f" stroke-width="1" fill="none"/>
<polygon points="837,435 847,435 842,444" fill="#e20000"/>
<polygon points="837,667 847,667 842,658" fill="#e20000"/>
</svg>
<svg style="left:707px;top:144px" width="16" height="16" viewBox="0 0 16 16"><rect x="2.6" y="3.6" width="10.8" height="8.8" fill="#f6f6f6" stroke="#000" stroke-width="1.3"/><path d="M4.5 5.5H11.5M4.5 10.5H11.5M5.5 5V11M10.5 5V11M8.5 8.5H11M8.5 8.5V10.5" stroke="#c4c4c4" stroke-width="1" fill="none"/><path d="M0 0H3L0 3Z M16 0H13L16 3Z M0 16H3L0 13Z M16 16H13L16 13Z" fill="#000"/></svg>
<svg style="left:730px;top:144px" width="16" height="16" viewBox="0 0 16 16"><circle cx="6" cy="6" r="5.4" fill="#dedede" stroke="#000" stroke-width="1.1"/><circle cx="6" cy="6" r="4.3" fill="none" stroke="#f4f4f4" stroke-width=".9"/><path d="M3 6H9M6 3V9" stroke="#8b0000" stroke-width="2" fill="none"/><path d="M10 10L14.5 14.5" stroke="#000" stroke-width="2.1" stroke-linecap="round"/></svg>
<svg style="left:753px;top:144px" width="16" height="16" viewBox="0 0 16 16"><circle cx="6" cy="6" r="5.4" fill="#dedede" stroke="#000" stroke-width="1.1"/><circle cx="6" cy="6" r="4.3" fill="none" stroke="#f4f4f4" stroke-width=".9"/><path d="M3 6H9" stroke="#8b0000" stroke-width="2" fill="none"/><path d="M10 10L14.5 14.5" stroke="#000" stroke-width="2.1" stroke-linecap="round"/></svg>
<svg style="left:786px;top:145px" width="13" height="14" viewBox="0 0 13 14"><path d="M1 1L7 3.5L3.5 6.5Z" fill="#000"/><path d="M5 3.5C10 4 12 8 7 12" stroke="#000" stroke-width="2.4" fill="none"/><path d="M4.5 11.5L9 9L9.5 13.5Z" fill="#000"/></svg>
<svg style="left:808px;top:145px" width="13" height="14" viewBox="0 0 13 14"><path d="M12 1L6 3.5L9.5 6.5Z" fill="#000"/><path d="M8 3.5C3 4 1 8 6 12" stroke="#000" stroke-width="2.4" fill="none"/><path d="M8.5 11.5L4 9L3.5 13.5Z" fill="#000"/></svg>
<svg style="left:832px;top:145px" width="14" height="14" viewBox="0 0 14 14"><rect x=".5" y=".5" width="13" height="13" fill="#e6e6e6" stroke="#8c8c8c"/><path d="M7 4.2L9.8 7L7 9.8L4.2 7Z" fill="none" stroke="#000" stroke-width=".9"/><path d="M7 2V12M2 7H12" stroke="#000" stroke-width=".9"/></svg>
<svg style="left:853px;top:150px" width="8" height="4" viewBox="0 0 8 4"><path d="M0 0H8L4 4Z" fill="#222"/></svg>
<svg style="left:753px;top:416px" width="16" height="16" viewBox="0 0 16 16"><circle cx="6" cy="6" r="5.4" fill="#dedede" stroke="#000" stroke-width="1.1"/><circle cx="6" cy="6" r="4.3" fill="none" stroke="#f4f4f4" stroke-width=".9"/><path d="M3 6H9" stroke="#8b0000" stroke-width="2" fill="none"/><path d="M10 10L14.5 14.5" stroke="#000" stroke-width="2.1" stroke-linecap="round"/></svg>
<svg style="left:783px;top:415px" width="17" height="17" viewBox="0 0 17 17"><path d="M8.5 0L11 3H6Z M8.5 17L11 14H6Z M0 8.5L3 6V11Z M17 8.5L14 6V11Z" fill="#000"/><path d="M8.5 3V14M3 8.5H14" stroke="#000" stroke-width="1" stroke-dasharray="1.5 1.5"/></svg>
<div style="left:744px;top:677px;width:68px;height:21px;background:#e1e1e1;border:2px solid #0078d7;box-sizing:border-box;"></div>
<div style="left:821px;top:677px;width:68px;height:21px;background:#e1e1e1;border:1px solid #adadad;box-sizing:border-box;"></div>
<div style="left:898px;top:677px;width:68px;height:21px;background:#e1e1e1;border:1px solid #adadad;box-sizing:border-box;"></div>
<span class="t ms" style="left:678px;width:200px;text-align:center;transform-origin:50% 0;top:681px;color:#000;transform:scaleX(0.88);">OK</span>
<span class="t ms" style="left:755px;width:200px;text-align:center;transform-origin:50% 0;top:681px;color:#000;transform:scaleX(0.88);">Cancel</span>
<span class="t ms" style="left:832px;width:200px;text-align:center;transform-origin:50% 0;top:681px;color:#000;transform:scaleX(0.88);">Help</span>
<svg style="left:965px;top:697px" width="12" height="12" viewBox="0 0 12 12"><g fill="#bfbfbf"><rect x="8" y="8" width="2" height="2"/><rect x="8" y="4" width="2" height="2"/><rect x="4" y="8" width="2" height="2"/><rect x="8" y="0" width="2" height="2"/><rect x="4" y="4" width="2" height="2"/><rect x="0" y="8" width="2" height="2"/></g></svg>
<div style="left:545px;top:239px;width:202px;height:280px;background:#f0f0f0;border:1px solid #999;box-sizing:border-box;box-shadow:2px 2px 1.5px rgba(0,0,0,.5);"></div>
<div style="left:549px;top:285px;width:194px;height:1px;background:#a0a0a0;"></div>
<div style="left:549px;top:334px;width:194px;height:1px;background:#a0a0a0;"></div>
<div style="left:549px;top:383px;width:194px;height:1px;background:#a0a0a0;"></div>
<div style="left:549px;top:412px;width:194px;height:1px;background:#a0a0a0;"></div>
<div style="left:549px;top:461px;width:194px;height:1px;background:#a0a0a0;"></div>
<div style="left:549px;top:490px;width:194px;height:1px;background:#a0a0a0;"></div>
<div style="left:568px;top:469px;width:176px;height:15px;background:#0078d7;"></div>
<span class="t sg" style="left:571.8px;top:245px;color:#000;font-size:12px;letter-spacing:-0.03px;">Insert outside</span>
<span class="t sg" style="left:571.8px;top:265px;color:#000;font-size:12px;letter-spacing:-0.06px;">Insert inside</span>
<span class="t sg" style="left:571.8px;top:294px;color:#8b8b8b;font-size:12px;letter-spacing:0.11px;">Split</span>
<span class="t sg" style="left:571.8px;top:314px;color:#8b8b8b;font-size:12px;letter-spacing:0.23px;">Split with trim</span>
<span class="t sg" style="left:571.8px;top:343px;color:#8b8b8b;font-size:12px;letter-spacing:0.18px;">Add trim on top edge</span>
<span class="t sg" style="left:571.8px;top:363px;color:#8b8b8b;font-size:12px;letter-spacing:0.22px;">Add trim on bottom edge</span>
<span class="t sg" style="left:571.8px;top:392px;color:#8b8b8b;font-size:12px;letter-spacing:-0.22px;">Delete</span>
<span class="t sg" style="left:571.8px;top:421px;color:#8b8b8b;font-size:12px;letter-spacing:0.18px;">Move up</span>
<span class="t sg" style="left:571.8px;top:441px;color:#8b8b8b;font-size:12px;letter-spacing:0.28px;">Move down</span>
<span class="t sg" style="left:571.8px;top:470px;color:#fff;font-size:12px;letter-spacing:0.05px;">Framing Tools</span>
<span class="t sg" style="left:571.8px;top:499px;color:#000;font-size:12px;letter-spacing:-0.10px;">Properties</span>
</div></body></html>
